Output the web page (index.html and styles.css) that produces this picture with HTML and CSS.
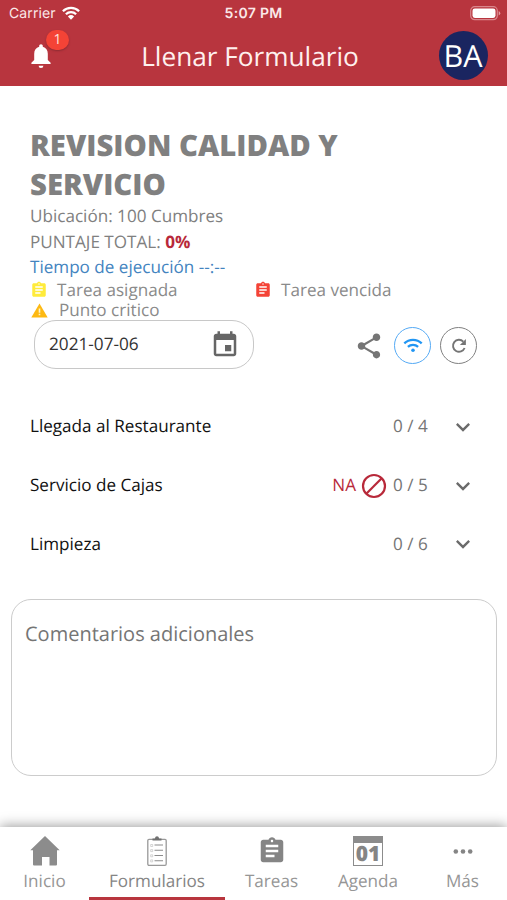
FILE: index.html
```html
<!DOCTYPE html>
<html lang="es">
<head>
<meta charset="utf-8">
<meta name="viewport" content="width=device-width, initial-scale=1">
<title>Llenar Formulario</title>
<link rel="stylesheet" href="styles.css">
</head>
<body>
<svg class="defs" width="0" height="0" aria-hidden="true">
  <symbol id="clipboard" viewBox="0 0 24 24"><path fill="currentColor" d="M19 3h-4.18C14.4 1.84 13.3 1 12 1s-2.4.84-2.82 2H5c-1.1 0-2 .9-2 2v14c0 1.100.9 2 2 2h14c1.100 0 2-.9 2-2V5c0-1.100-.9-2-2-2zm-7 0c.55 0 1 .45 1 1s-.45 1-1 1-1-.45-1-1 .45-1 1-1zm2 14H7v-2h7v2zm3-4H7v-2h10v2zm0-4H7V7h10v2z"/></symbol>
  <symbol id="chevron" viewBox="0 0 24 24"><path fill="currentColor" d="M7.410 8.590 12 13.170l4.590-4.580L18 10l-6 6-6-6z"/></symbol>
</svg>
<div class="app">
  <header class="header">
    <div class="status">
      <div class="carrier"><span>Carrier</span>
        <svg width="18" height="14" viewBox="0 0 18 14" fill="none" stroke="#fff" stroke-width="2.300"><path d="M.9 5.200a11.600 11.600 0 0 1 16.200 0M3.900 8.200a7.300 7.300 0 0 1 10.200 0"/><path fill="#fff" stroke="none" d="M5.900 10.400a4.500 4.500 0 0 1 6.200 0L9 13.700z"/></svg>
      </div>
      <span class="time">5:07 PM</span>
      <svg class="battery" width="31" height="15" viewBox="0 0 31 15"><rect x=".7" y=".7" width="26.600" height="13" rx="4" fill="none" stroke="#d9868c" stroke-width="1.200"/><rect x="2.500" y="2.500" width="23" height="9.400" rx="2.300" fill="#fff"/><path d="M28.700 5v4.600q1.600-.8 1.600-2.300T28.700 5z" fill="#e39ba0"/></svg>
    </div>
    <div class="toolbar">
      <div class="bell">
        <svg width="20" height="25" viewBox="0 0 20 25" fill="#fff"><path d="M10 .3c-1.100 0-1.800.8-1.800 1.800v.7C5 3.600 3.200 6.300 3.200 9.700v6.200L.4 18.700v1.400h19.200v-1.400l-2.800-2.800V9.700c0-3.400-1.800-6.100-5-6.900v-.7c0-1-.7-1.800-1.800-1.800zM7.600 21.700a2.400 2.400 0 0 0 4.800 0z"/></svg>
        <span class="badge">1</span>
      </div>
      <h1 class="screen-title">Llenar Formulario</h1>
      <div class="avatar">BA</div>
    </div>
  </header>

  <main class="content">
    <section class="intro">
      <h2 class="form-title">REVISION CALIDAD Y SERVICIO</h2>
      <p class="meta place">Ubicación: 100 Cumbres</p>
      <p class="meta score">PUNTAJE TOTAL: <b>0%</b></p>
      <p class="meta elapsed">Tiempo de ejecución --:--</p>
      <div class="legend">
        <div class="key"><svg class="assigned" width="18" height="18"><use href="#clipboard"/></svg><span>Tarea asignada</span></div>
        <div class="key"><svg class="overdue" width="18" height="18"><use href="#clipboard"/></svg><span>Tarea vencida</span></div>
        <div class="key critical"><svg width="17" height="15" viewBox="0 0 17 15"><path fill="#fdb913" d="M8.500.5 16.700 14.500H.3z"/><path fill="#fff3c8" d="M7.700 5.400h1.600v4.300H7.700zm0 5.300h1.600v1.500H7.700z"/></svg><span>Punto critico</span></div>
      </div>
    </section>

    <div class="controls">
      <div class="date"><span>2021-07-06</span>
        <svg width="30" height="30" viewBox="0 0 24 24" fill="#666"><path d="M17 12h-5v5h5v-5zM16 1v2H8V1H6v2H5c-1.110 0-1.990.9-1.990 2L3 19c0 1.100.89 2 2 2h14c1.100 0 2-.9 2-2V5c0-1.100-.9-2-2-2h-1V1h-2zm3 18H5V8h14v11z"/></svg>
      </div>
      <svg class="share" width="30" height="30" viewBox="0 0 24 24" fill="#757575"><path d="M18 16.080c-.76 0-1.440.3-1.960.77L8.910 12.700c.05-.23.090-.46.090-.7s-.04-.47-.09-.7l7.050-4.110c.54.5 1.250.81 2.040.81 1.660 0 3-1.340 3-3s-1.340-3-3-3-3 1.340-3 3c0 .24.040.47.090.7L8.040 9.810C7.500 9.310 6.790 9 6 9c-1.660 0-3 1.340-3 3s1.340 3 3 3c.79 0 1.500-.31 2.040-.81l7.120 4.160c-.05.21-.08.43-.08.65 0 1.610 1.310 2.920 2.920 2.920s2.920-1.310 2.920-2.920-1.310-2.920-2.920-2.920z"/></svg>
      <div class="round online"><svg width="20" height="15" viewBox="0 0 20 15" fill="none" stroke="currentColor" stroke-width="2.300"><path d="M1.300 5.400a12.600 12.600 0 0 1 17.400 0M4.900 8.800a7.500 7.500 0 0 1 10.200 0"/><circle cx="10" cy="12.300" r="1.800" fill="currentColor" stroke="none"/></svg></div>
      <div class="round"><svg width="16" height="16" viewBox="0 0 16 16"><path d="M13.600 10A6 6 0 1 1 12.300 3.600" fill="none" stroke="currentColor" stroke-width="1.900"/><path d="M14.900 1v6H8.900z" fill="currentColor"/></svg></div>
    </div>

    <div class="sections">
      <div class="row"><span class="name">Llegada al Restaurante</span><span class="count">0 / 4</span><svg width="28" height="28"><use href="#chevron"/></svg></div>
      <div class="row"><span class="name">Servicio de Cajas</span><span class="na">NA</span><svg class="ban" width="26" height="26" viewBox="0 0 26 26" fill="none" stroke="#b8293a" stroke-width="2.200"><circle cx="13" cy="13" r="11"/><path d="M5.300 20.700 20.700 5.300"/></svg><span class="count">0 / 5</span><svg width="28" height="28"><use href="#chevron"/></svg></div>
      <div class="row"><span class="name">Limpieza</span><span class="count">0 / 6</span><svg width="28" height="28"><use href="#chevron"/></svg></div>
    </div>

    <div class="comments"><span>Comentarios adicionales</span></div>
  </main>

  <nav class="tabs">
    <div class="tab"><svg width="30" height="30" viewBox="0 0 30 30" fill="#8c8c8c"><path d="M15 0 29.700 14.200H27v14.300q0 1-1 1h-6.500V21H12v8.500H4q-1 0-1-1V14.200H.3z"/></svg><span>Inicio</span></div>
    <div class="tab active"><svg width="20" height="30" viewBox="0 0 20 30"><rect x=".8" y="3.300" width="18.400" height="26" rx="1.200" fill="#fff" stroke="#999" stroke-width="1.300"/><path d="M5.500 4.500V2.500h2.300Q8.300.3 10 .3t2.200 2.200h2.300v2z" fill="#707070"/><path d="M7.500 9h8.500M7.500 14.300h8.500M7.500 19.500h8.500M7.500 24.700h8.500" stroke="#8c8c8c" stroke-width="1.100"/><path d="M3.700 8.500h2v2h-2zm0 5.100h2v2h-2zm0 5.200h2v2h-2zm0 5.100h2v2h-2z" fill="none" stroke="#bbb" stroke-width=".6"/></svg><span>Formularios</span></div>
    <div class="tab"><svg class="tasks" width="30" height="30"><use href="#clipboard"/></svg><span>Tareas</span></div>
    <div class="tab"><div class="calendar"><b>01</b></div><span>Agenda</span></div>
    <div class="tab"><svg width="20" height="30" viewBox="0 0 20 30" fill="#858585"><circle cx="2.800" cy="15.500" r="2.300"/><circle cx="10" cy="15.500" r="2.300"/><circle cx="17.200" cy="15.500" r="2.300"/></svg><span>Más</span></div>
  </nav>
</div>
</body>
</html>
```

FILE: styles.css
```css
* { box-sizing: border-box; }
body { margin: 0; background: #fff; font-family: "Open Sans", sans-serif; color: #808080; text-rendering: geometricPrecision; }
h1, h2, p { margin: 0; }
svg { display: block; flex: none; }
span { white-space: nowrap; }
.defs { position: absolute; }
.app { height: 900px; display: flex; flex-direction: column; overflow: hidden; }

.header { height: 86px; background: #b8353e; color: #fff; flex: none; }
.status { height: 27px; padding: 0 6px 0 9px; display: grid; grid-template-columns: 1fr auto 1fr; align-items: center; font: 14px/27px Inter, sans-serif; color: #fbe9e9; }
.carrier { display: flex; align-items: center; gap: 6px; letter-spacing: .1px; }
.carrier svg { margin-top: -1px; }
.time { font-weight: 600; font-size: 14px; letter-spacing: .3px; margin-right: 3px; }
.battery { justify-self: end; }
.toolbar { height: 59px; padding: 0 19px 0 31px; display: grid; grid-template-columns: 49px 340px 49px; justify-content: space-between; align-items: center; }
.bell { position: relative; width: 49px; margin-top: -1px; }
.badge { position: absolute; left: 15px; top: -14px; width: 23px; height: 20px; border-radius: 10px; background: #f44336; color: #ffe2dd; font-size: 14px; line-height: 19px; text-align: center; box-shadow: 0 1px 2px #8d2b32; }
.screen-title { font-size: 26.200px; font-weight: 400; line-height: 56px; margin-top: -2px; padding-right: 19px; color: #fff0ee; white-space: nowrap; text-align: center; }
.avatar { width: 49px; height: 49px; margin-top: -2px; border-radius: 50%; background: #1a2560; font: 30.500px/48px "Open Sans", sans-serif; text-align: center; text-indent: -1px; }

.content { flex: 1; padding-top: 40px; }
.intro { padding: 0 30px; }
.form-title { width: 340px; font-size: 29.300px; line-height: 39px; font-weight: 800; color: #808080; }
.meta { font-size: 17.100px; line-height: 25.700px; }
.meta b { color: #b8293a; }
.elapsed { color: #4384bf; }
.legend { display: grid; grid-template-columns: 224px 1fr; grid-auto-rows: 19.500px; font-size: 17.100px; color: #8a8a8a; }
.key { display: flex; align-items: center; gap: 9px; line-height: 19px; }
.key svg { margin-top: -2px; }
.critical { gap: 11px; padding-left: 1px; }
.critical svg { margin: 0; }
.assigned { color: #ffeb3b; }
.overdue { color: #f44336; }

.controls { display: flex; align-items: center; padding: 0 29px 0 34px; }
.date { width: 220px; height: 49px; flex: none; border: 1.500px solid #c8c8c8; border-radius: 22px; display: flex; align-items: center; justify-content: space-between; padding: 0 13px 0 14px; font-size: 17.200px; color: #333; margin-right: 100px; }
.date span { margin-top: -1px; }
.share { margin: 2px 10px 0 0; }
.round { width: 37px; height: 37px; flex: none; border: 1.500px solid #808080; border-radius: 50%; display: flex; align-items: center; justify-content: center; color: #757575; margin: 2px 0 0 9px; }
.online { color: #2196f3; border-color: #55aaf5; margin-left: 0; }

.sections { padding: 28.500px 30px 0 30px; }
.row { height: 58.700px; display: flex; align-items: center; color: #757575; font-size: 17.100px; }
.row svg { color: #6b6b6b; }
.name { flex: 1; color: #111; }
.count { width: 56px; }
.na { color: #b8293a; margin-right: 5px; }
.ban { margin-right: 6px; }
.comments { margin: 25.500px 10px 0 11px; height: 177px; border: 1.500px solid #ccc; border-radius: 20px; padding: 20px 13px; font-size: 20px; line-height: 27px; color: #757575; }

.tabs { height: 73px; flex: none; background: #fff; box-shadow: 0 -1px 12px rgba(0,0,0,.4); display: grid; grid-template-columns: 89px 136px 93px 100px 89px; }
.tab { display: flex; flex-direction: column; align-items: center; padding-top: 9px; font-size: 17.100px; color: #969696; }
.tab span { line-height: 31px; }
.active { border-bottom: 3px solid #b8353e; color: #858585; }
.tasks { color: #858585; }
.calendar { width: 30px; height: 30px; border: 1.500px solid #8c8c8c; border-top-width: 7px; display: flex; justify-content: center; color: #858585; }
.calendar b { font-size: 21px; line-height: 23px; font-weight: 800; }
```
